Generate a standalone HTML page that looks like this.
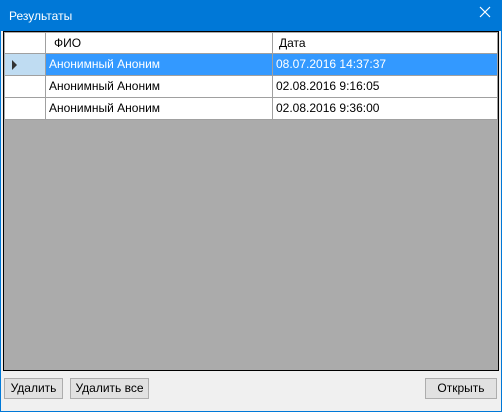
<!DOCTYPE html><html><head><style>
*{margin:0;padding:0;box-sizing:border-box}
body{width:502px;height:412px;background:#0078d7;font-family:"Liberation Sans",sans-serif;font-size:12px;position:relative;overflow:hidden}
.win{position:absolute;left:1px;top:31px;width:500px;height:380px;background:#f0f0f0}
.title{position:absolute;left:9px;top:9px;color:#fff;font-size:12px}
.x{position:absolute;left:478px;top:5px;width:14px;height:14px}
.grid{position:absolute;left:3px;top:31px;width:496px;height:340px;background:#ababab;border:1px solid #000}
.c{position:absolute;background:#fff;border-right:1px solid #a0a0a0;border-bottom:1px solid #a0a0a0;padding-left:4px;line-height:20px;white-space:nowrap;overflow:hidden}
.btn{position:absolute;top:378px;height:21px;background:#e1e1e1;border:1px solid #adadad;text-align:center;line-height:19px}
</style></head><body>
<div class="title">Результаты</div>
<svg class="x" viewBox="0 0 14 14"><path d="M2 2L12 12M12 2L2 12" stroke="#fff" stroke-width="1.2"/></svg>
<div class="win"></div>
<div class="grid">
<div class="c" style="left:1px;top:1px;width:41px;height:21px"></div>
<div class="c" style="left:42px;top:1px;width:227px;height:21px;padding-left:8px">ФИО</div>
<div class="c" style="left:269px;top:1px;width:225px;height:21px;padding-left:6px">Дата</div>
<div class="c" style="left:1px;top:22px;width:41px;height:22px;background:#bfdcf2"><svg width="8" height="10" style="position:absolute;left:6px;top:6px"><path d="M1 0L6 5L1 10Z" fill="#333"/></svg></div>
<div class="c" style="left:42px;top:22px;width:227px;height:22px;background:#3399ff;color:#fff;padding-left:3px">Анонимный Аноним</div>
<div class="c" style="left:269px;top:22px;width:225px;height:22px;background:#3399ff;color:#fff;padding-left:3px">08.07.2016 14:37:37</div>
<div class="c" style="left:1px;top:44px;width:41px;height:22px"></div>
<div class="c" style="left:42px;top:44px;width:227px;height:22px;padding-left:3px">Анонимный Аноним</div>
<div class="c" style="left:269px;top:44px;width:225px;height:22px;padding-left:3px">02.08.2016 9:16:05</div>
<div class="c" style="left:1px;top:66px;width:41px;height:22px"></div>
<div class="c" style="left:42px;top:66px;width:227px;height:22px;padding-left:3px">Анонимный Аноним</div>
<div class="c" style="left:269px;top:66px;width:225px;height:22px;padding-left:3px">02.08.2016 9:36:00</div>
</div>
<div class="btn" style="left:4px;width:59px">Удалить</div>
<div class="btn" style="left:70px;width:79px">Удалить все</div>
<div class="btn" style="left:425px;width:72px">Открыть</div>
</body></html>
